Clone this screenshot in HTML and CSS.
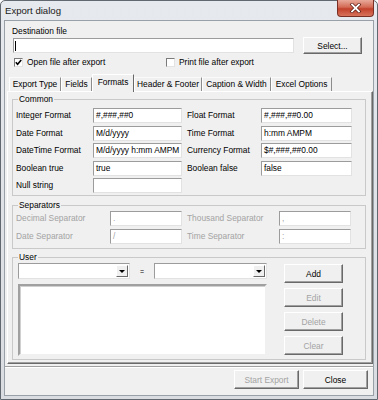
FILE: index.html
```html
<!DOCTYPE html>
<html lang="en">
<head>
    <meta charset="UTF-8">
    <title>Export dialog</title>
    <link rel="stylesheet" href="styles.css">
</head>
<body>
    <div class="window">
        <!-- Title bar -->
        <div class="titlebar">
            <span class="title">Export dialog</span>
            <span class="close-btn">
                <svg width="13" height="10" viewBox="0 0 13 10">
                    <path d="M3 1.5 L10 8.5 M10 1.5 L3 8.5" stroke="#5a1a12" stroke-width="3.2" stroke-linecap="square"/>
                    <path d="M3 1.5 L10 8.5 M10 1.5 L3 8.5" stroke="#fff" stroke-width="1.8" stroke-linecap="square"/>
                </svg>
            </span>
        </div>

        <div class="client">
            <!-- Destination -->
            <div class="dest">
                <div class="dest-label">Destination file</div>
                <div class="dest-row">
                    <div class="field dest-input"><span class="caret"></span></div>
                    <div class="btn select-btn">Select...</div>
                </div>
                <div class="check-row">
                    <div class="check open">
                        <span class="box">
                            <svg width="7" height="7" viewBox="0 0 7 7"><path d="M0.8 3.2 L2.6 5.2 L6.2 1" stroke="#000" stroke-width="1.6" fill="none"/></svg>
                        </span>
                        Open file after export
                    </div>
                    <div class="check">
                        <span class="box"></span>
                        Print file after export
                    </div>
                </div>
            </div>

            <!-- Tabs -->
            <div class="tabs">
                <div class="tab t-export">Export Type</div>
                <div class="tab t-fields">Fields</div>
                <div class="tab tab-active t-formats">Formats</div>
                <div class="tab t-header">Header &amp; Footer</div>
                <div class="tab t-caption">Caption &amp; Width</div>
                <div class="tab t-excel">Excel Options</div>
            </div>

            <div class="panel">
                <fieldset class="group common">
                    <legend>Common</legend>
                    <div class="grid grid-common">
                        <div class="lbl">Integer Format</div>
                        <div class="field">#,###,##0</div>
                        <div class="lbl c3">Float Format</div>
                        <div class="field">#,###,##0.00</div>

                        <div class="lbl">Date Format</div>
                        <div class="field">M/d/yyyy</div>
                        <div class="lbl c3">Time Format</div>
                        <div class="field">h:mm AMPM</div>

                        <div class="lbl">DateTime Format</div>
                        <div class="field">M/d/yyyy h:mm AMPM</div>
                        <div class="lbl c3">Currency Format</div>
                        <div class="field">$#,###,##0.00</div>

                        <div class="lbl">Boolean true</div>
                        <div class="field">true</div>
                        <div class="lbl c3">Boolean false</div>
                        <div class="field">false</div>

                        <div class="lbl">Null string</div>
                        <div class="field"></div>
                    </div>
                </fieldset>

                <fieldset class="group separators">
                    <legend>Separators</legend>
                    <div class="grid grid-sep">
                        <div class="lbl disabled">Decimal Separator</div>
                        <div class="field disabled">.</div>
                        <div class="lbl c3 disabled">Thousand Separator</div>
                        <div class="field disabled">,</div>

                        <div class="lbl disabled">Date Separator</div>
                        <div class="field disabled">/</div>
                        <div class="lbl c3 disabled">Time Separator</div>
                        <div class="field disabled">:</div>
                    </div>
                </fieldset>

                <fieldset class="group user">
                    <legend>User</legend>
                    <div class="user-body">
                        <div class="user-left">
                            <div class="combo-row">
                                <div class="combo"><span class="combo-arrow"><span class="tri"></span></span></div>
                                <div class="equals">=</div>
                                <div class="combo combo-2"><span class="combo-arrow"><span class="tri"></span></span></div>
                            </div>
                            <div class="listbox"></div>
                        </div>
                        <div class="user-buttons">
                            <div class="btn side-btn">Add</div>
                            <div class="btn side-btn disabled">Edit</div>
                            <div class="btn side-btn disabled">Delete</div>
                            <div class="btn side-btn disabled">Clear</div>
                        </div>
                    </div>
                </fieldset>
            </div>

            <!-- Footer -->
            <div class="footer">
                <div class="btn foot-btn disabled">Start Export</div>
                <div class="btn foot-btn">Close</div>
            </div>
        </div>
    </div>
</body>
</html>
```

FILE: styles.css
```css
body {
    margin: 0;
    font-family: "Liberation Sans", Arial, sans-serif;
    font-size: 8.4px;
    color: #000;
    background: #fff;
}
.window {
    width: 378px;
    height: 400px;
    box-sizing: border-box;
    border: 1px solid #62686f;
    border-radius: 5px 5px 0 0;
    background: linear-gradient(#e6e9ed, #d9dde2);
    padding: 0 3px 3px 3px;
    display: flex;
    flex-direction: column;
}
.titlebar {
    height: 19px;
    display: flex;
    align-items: flex-start;
}
.title {
    font-size: 9.6px;
    line-height: 20px;
    padding-left: 1px;
    color: #1a1a1a;
}
.close-btn {
    margin-left: auto;
    margin-top: -1px;
    width: 37px;
    height: 17px;
    box-sizing: border-box;
    border: 1px solid #7a2f25;
    border-top: none;
    border-radius: 0 0 4px 4px;
    background: linear-gradient(#e9a99a, #d36a55 45%, #c2412b 55%, #d8735c);
    display: flex;
    align-items: center;
    justify-content: center;
}
.client {
    flex: 1;
    background: #f0f0f0;
    border: 1px solid #9aa0a7;
    display: flex;
    flex-direction: column;
    min-height: 0;
}

/* destination */
.dest {
    padding: 5px 0 0 8px;
}
.dest-label {
    line-height: 10px;
    padding-left: 0;
    margin-left: -1px;
}
.dest-row {
    display: flex;
    align-items: center;
    margin-top: 1px;
    height: 17px;
}
.dest-input {
    width: 281px;
    display: flex;
    align-items: center;
}
.caret {
    display: block;
    width: 1px;
    height: 10px;
    background: #000;
    margin-left: -1px;
}
.select-btn {
    width: 59px;
    height: 17px;
    margin-left: 9px;
}
.check-row {
    display: flex;
    margin-top: 3px;
    height: 11px;
    align-items: center;
}
.check {
    display: flex;
    align-items: center;
    line-height: 11px;
    margin-left: 1px;
}
.check.open {
    width: 151px;
}
.box {
    width: 9px;
    height: 9px;
    box-sizing: border-box;
    border: 1px solid;
    border-color: #7b7b7b #e3e3e3 #e3e3e3 #7b7b7b;
    background: #fff;
    margin-right: 4px;
    display: flex;
    align-items: center;
    justify-content: center;
}

/* generic controls */
.field {
    height: 15px;
    box-sizing: border-box;
    background: #fff;
    border: 1px solid;
    border-color: #9c9c9c #e2e2e2 #e2e2e2 #9c9c9c;
    padding: 0 2px;
    line-height: 13px;
    white-space: nowrap;
    overflow: hidden;
}
.btn {
    box-sizing: border-box;
    background: #f0f0f0;
    border: 1px solid;
    border-color: #fff #696969 #696969 #fff;
    box-shadow: inset -1px -1px 0 #a0a0a0;
    display: flex;
    align-items: center;
    justify-content: center;
}
.disabled {
    color: #a3a3a3;
}

/* tabs */
.tabs {
    display: flex;
    align-items: flex-end;
    height: 17px;
    margin-top: 6px;
    padding-left: 4px;
    position: relative;
    z-index: 1;
}
.tab {
    height: 14px;
    box-sizing: border-box;
    border-left: 1px solid #fff;
    border-top: 1px solid #fafafa;
    border-right: 1px solid #8c8c8c;
    text-align: center;
    line-height: 13px;
    white-space: nowrap;
}
.tab-active {
    height: 18px;
    margin-bottom: -1px;
    background: #f0f0f0;
    border-top: 1px solid #fff;
    border-right: 1px solid #696969;
    line-height: 14px;
}
.t-export { width: 52px; }
.t-fields { width: 31px; }
.t-formats { width: 42px; }
.t-header { width: 68px; }
.t-caption { width: 69px; }
.t-excel { width: 61px; }

.panel {
    margin-left: 2px;
    border: 1px solid;
    border-color: #fff #696969 #696969 #fff;
    box-shadow: inset -1px -1px 0 #a0a0a0;
    padding: 2px 6px 3px 4px;
}

/* group boxes */
.group {
    margin: 0;
    border: 1px solid #c9c9c9;
    min-width: 0;
}
.group legend {
    padding: 0 1px;
    margin-left: 2px;
    line-height: 10px;
}
.common {
    padding: 4px 0 2px 3px;
}
.separators {
    margin-top: 4px;
    padding: 1px 0 4px 3px;
}
.user {
    margin-top: 3px;
    padding: 1px 0 3px 5px;
}
.user legend {
    margin-left: 0;
}
.grid {
    display: grid;
}
.grid-common {
    grid-template-columns: 77px 89px 79px 91px;
    row-gap: 2.5px;
}
.grid-sep {
    grid-template-columns: 94px 72px 97px 72px;
    row-gap: 3px;
}
.lbl {
    line-height: 15px;
    white-space: nowrap;
}
.c3 {
    padding-left: 5px;
}

/* user section */
.user-body {
    display: flex;
}
.user-left {
    width: 249px;
    display: flex;
    flex-direction: column;
    gap: 5px;
}
.combo-row {
    display: flex;
    align-items: center;
    height: 16px;
}
.combo {
    width: 112px;
    height: 16px;
    box-sizing: border-box;
    background: #fff;
    border: 1px solid;
    border-color: #9c9c9c #e2e2e2 #e2e2e2 #9c9c9c;
    display: flex;
    justify-content: flex-end;
    padding: 1px;
}
.combo-2 {
    width: 113px;
}
.combo-arrow {
    width: 12px;
    box-sizing: border-box;
    background: #f0f0f0;
    border: 1px solid;
    border-color: #fff #696969 #696969 #fff;
    display: flex;
    align-items: center;
    justify-content: center;
}
.tri {
    width: 0;
    height: 0;
    border-left: 3px solid transparent;
    border-right: 3px solid transparent;
    border-top: 3px solid #000;
}
.equals {
    width: 24px;
    text-align: center;
    font-size: 7px;
}
.listbox {
    height: 72px;
    box-sizing: border-box;
    background: #fff;
    border: 2px solid;
    border-color: #a0a0a0 #f0f0f0 #f0f0f0 #a0a0a0;
    box-shadow: inset 1px 1px 0 #d0d0d0;
}
.user-buttons {
    margin-left: 17px;
    padding-top: 1px;
    display: flex;
    flex-direction: column;
    gap: 5px;
}
.side-btn {
    width: 59px;
    height: 19px;
}

/* footer */
.footer {
    margin-top: 2px;
    border-top: 1px solid #a0a0a0;
    box-shadow: inset 0 1px 0 #fff;
    padding: 3px 5px 2px 0;
    display: flex;
    justify-content: flex-end;
    gap: 4px;
}
.foot-btn {
    width: 65px;
    height: 19px;
}
```
